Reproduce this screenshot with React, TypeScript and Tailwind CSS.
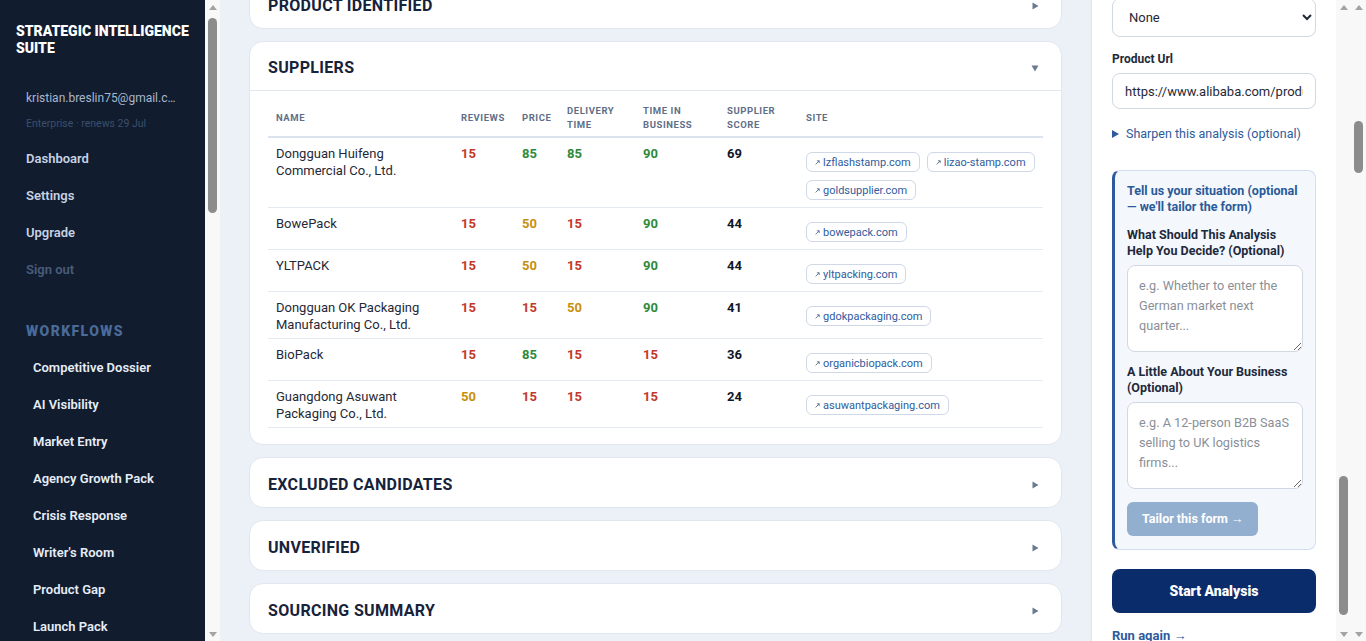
import { useLayoutEffect, useRef, type ReactNode, type Ref } from "react";

const SUPPLIERS = [
  { name: "Dongguan Huifeng Commercial Co., Ltd.", reviews: 15, price: 85, delivery: 85, tib: 90, score: 69, sites: ["lzflashstamp.com", "lizao-stamp.com", "goldsupplier.com"] },
  { name: "BowePack", reviews: 15, price: 50, delivery: 15, tib: 90, score: 44, sites: ["bowepack.com"] },
  { name: "YLTPACK", reviews: 15, price: 50, delivery: 15, tib: 90, score: 44, sites: ["yltpacking.com"] },
  { name: "Dongguan OK Packaging Manufacturing Co., Ltd.", reviews: 15, price: 15, delivery: 50, tib: 90, score: 41, sites: ["gdokpackaging.com"] },
  { name: "BioPack", reviews: 15, price: 85, delivery: 15, tib: 15, score: 36, sites: ["organicbiopack.com"] },
  { name: "Guangdong Asuwant Packaging Co., Ltd.", reviews: 50, price: 15, delivery: 15, tib: 15, score: 24, sites: ["asuwantpackaging.com"] },
];

const WORKFLOWS = [
  "Competitive Dossier", "AI Visibility", "Market Entry", "Agency Growth Pack",
  "Crisis Response", "Writer's Room", "Product Gap", "Launch Pack",
];

const LOWER_SECTIONS = ["Excluded Candidates", "Unverified", "Sourcing Summary"];

function scoreColor(v: number) {
  if (v >= 85) return "text-[#2e8a3b]";
  if (v >= 50) return "text-[#c98f0c]";
  return "text-[#c2382b]";
}

function TriRight() {
  return (
    <svg width="7" height="8" viewBox="0 0 7 8" className="shrink-0">
      <path d="M0.5 0.5L6.5 4L0.5 7.5Z" fill="#6b7a90" />
    </svg>
  );
}

function TriDown() {
  return (
    <svg width="8" height="7" viewBox="0 0 8 7" className="shrink-0">
      <path d="M0.5 0.5H7.5L4 6.5Z" fill="#6b7a90" />
    </svg>
  );
}

function LinkArrow() {
  return (
    <svg width="5" height="5" viewBox="0 0 5 5" className="shrink-0">
      <path d="M0.6 4.4L4.2 0.8M1.9 0.8H4.2V3.1" fill="none" stroke="#5a6f8f" strokeWidth="0.9" />
    </svg>
  );
}

// classic scrollbar: arrows + thumb (thumb offset/size passed as full class names)
function ScrollBar({ thumb }: { thumb: string }) {
  return (
    <div className="flex h-screen w-[15px] shrink-0 flex-col bg-[#f8f8f8]">
      <div className="flex h-[14px] items-center justify-center">
        <svg width="8" height="5" viewBox="0 0 8 5"><path d="M0 5L4 0L8 5Z" fill="#a3a3a3" /></svg>
      </div>
      <div className="flex-1 px-[3px]">
        <div className={`w-[9px] rounded-full bg-[#8c8c8c] ${thumb}`} />
      </div>
      <div className="flex h-[14px] items-center justify-center">
        <svg width="8" height="5" viewBox="0 0 8 5"><path d="M0 0L8 0L4 5Z" fill="#a3a3a3" /></svg>
      </div>
    </div>
  );
}

function Card({ title, open, children }: { title: string; open?: boolean; children?: ReactNode }) {
  return (
    <section className="rounded-[14px] border border-[#e1e7f0] bg-white">
      <div className={`flex h-[49px] items-center justify-between pt-1 pl-[18px] pr-[22px] ${open ? "border-b border-[#e1e7f0]" : ""}`}>
        <h2 className="text-[16px] font-bold uppercase tracking-[0.02em] text-[#17223b]">{title}</h2>
        {open ? <TriDown /> : <TriRight />}
      </div>
      {open && children}
    </section>
  );
}

function SuppliersTable() {
  const th = "px-2 pt-2 pb-1 text-left align-middle text-[9.5px] font-bold uppercase leading-[14px] tracking-[0.06em] text-[#5f6f88]";
  const num = "px-2 pt-[7px] pb-[5px] align-top text-[13px] font-bold leading-[17px]";
  return (
    <div className="px-[18px] pt-[5px] pb-4">
      <table className="w-full table-fixed border-collapse">
        <colgroup>
          <col className="w-[185px]" />
          <col className="w-[61px]" />
          <col className="w-[45px]" />
          <col className="w-[76px]" />
          <col className="w-[84px]" />
          <col className="w-[79px]" />
          <col />
        </colgroup>
        <thead>
          <tr className="border-b-2 border-[#dbe3ee]">
            <th className={th}>Name</th>
            <th className={th}>Reviews</th>
            <th className={th}>Price</th>
            <th className={th}>Delivery<br />Time</th>
            <th className={th}>Time in<br />Business</th>
            <th className={th}>Supplier<br />Score</th>
            <th className={th}>Site</th>
          </tr>
        </thead>
        <tbody>
          {SUPPLIERS.map((s) => (
            <tr key={s.name} className="border-b border-[#e5e9f0]">
              <td className="px-2 pt-[7px] pb-[5px] align-top text-[13px] leading-[17px] text-[#1f2937]">{s.name}</td>
              <td className={`${num} ${scoreColor(s.reviews)}`}>{s.reviews}</td>
              <td className={`${num} ${scoreColor(s.price)}`}>{s.price}</td>
              <td className={`${num} ${scoreColor(s.delivery)}`}>{s.delivery}</td>
              <td className={`${num} ${scoreColor(s.tib)}`}>{s.tib}</td>
              <td className={`${num} text-[#111827]`}>{s.score}</td>
              <td className="pt-[7px] pb-[5px] pl-2 align-top">
                <div className="mt-[7px] mb-[2px] flex flex-wrap gap-x-[7px] gap-y-2">
                  {s.sites.map((site) => (
                    <a key={site} className="flex h-5 items-center gap-[3px] rounded-md border border-[#cfd8e6] px-2 text-[11px] leading-none text-[#2f5c9e]">
                      <LinkArrow />
                      {site}
                    </a>
                  ))}
                </div>
              </td>
            </tr>
          ))}
        </tbody>
      </table>
    </div>
  );
}

function Sidebar() {
  return (
    <div className="flex h-screen w-[220px] shrink-0 bg-[#111c2f]">
      <aside className="h-screen w-[205px] overflow-hidden">
        <div className="pt-[23px] pr-3 pl-4 text-[14px] font-black uppercase leading-[17px] text-white">
          Strategic Intelligence Suite
        </div>
        <div className="px-[26px]">
          <div className="mt-[33px] truncate text-[12px] leading-4 text-[#a9b7cc]">kristian.breslin75@gmail.com</div>
          <div className="mt-[11px] text-[10.5px] leading-[14px] text-[#3c4f6b]">Enterprise · renews 29 Jul</div>
          <nav className="mt-[9px]">
            {["Dashboard", "Settings", "Upgrade"].map((n) => (
              <a key={n} className="block py-[9.5px] text-[13px] font-semibold leading-[18px] text-[#c7d2e3]">{n}</a>
            ))}
            <a className="block py-[9.5px] text-[13px] font-semibold leading-[18px] text-[#4a5d7a]">Sign out</a>
          </nav>
          <div className="mt-[34px] text-[14px] font-black uppercase leading-[18px] tracking-[0.1em] text-[#4a6a98]">Workflows</div>
        </div>
        <nav className="mt-[9px] px-[33px]">
          {WORKFLOWS.map((w) => (
            <a key={w} className="block py-[9.5px] text-[13px] font-semibold leading-[18px] text-[#e6edf7]">{w}</a>
          ))}
        </nav>
      </aside>
      <ScrollBar thumb="mt-[4px] h-[195px]" />
    </div>
  );
}

function FormPanel({ panelRef, selectRef }: { panelRef: Ref<HTMLElement>; selectRef: Ref<HTMLSelectElement> }) {
  const label = "mb-1.5 block text-[12px] font-bold leading-4 text-[#1e293b]";
  const box = "w-full rounded-lg border border-[#cfd8e3] bg-white px-3 text-[13px] text-[#1f2937] outline-none";
  const area = "mt-1.5 block h-[87px] w-full rounded-lg border border-[#cfd8e3] bg-white px-[11px] py-2.5 text-[12.7px] leading-5 text-[#1f2937] outline-none placeholder:text-[#8a8f98]";
  return (
    <div className="flex h-screen w-[260px] shrink-0 border-l border-[#dde4ee] bg-white">
      <aside ref={panelRef} className="h-screen flex-1 overflow-hidden px-5">
        <div className="pt-5">
          <label className={label}>Existing Supplier</label>
          <select ref={selectRef} className={`${box} h-[39px]`} defaultValue="None">
            <option>None</option>
          </select>
        </div>
        <div className="mt-[14px]">
          <label className={label}>Product Url</label>
          <input className={`${box} h-9`} defaultValue="https://www.alibaba.com/product-detail/custom-logo-printed-kraft-mailer-box" />
        </div>
        <div className="mt-[17px] flex items-center gap-[7px] text-[12.5px] leading-4 text-[#2d5b9c]">
          <svg width="7" height="8" viewBox="0 0 7 8"><path d="M0 0L7 4L0 8Z" fill="#2d5b9c" /></svg>
          Sharpen this analysis (optional)
        </div>
        <div className="mt-[28px] rounded-lg border border-l-[3px] border-[#d4deec] border-l-[#2c5a9c] bg-[#f4f8fd] pt-3 pr-3 pb-[13px] pl-3">
          <div className="text-[12.5px] font-bold leading-4 text-[#2b5a98]">Tell us your situation (optional — we'll tailor the form)</div>
          <label className="mt-3 block text-[12.5px] font-bold leading-4 text-[#1e293b]">What Should This Analysis Help You Decide? (Optional)</label>
          <textarea className={area} placeholder={"e.g. Whether to enter the\nGerman market next\nquarter..."} />
          <label className="mt-3 block text-[12.5px] font-bold leading-4 text-[#1e293b]">A Little About Your Business (Optional)</label>
          <textarea className={area} placeholder={"e.g. A 12-person B2B SaaS\nselling to UK logistics\nfirms..."} />
          <button className="mt-[13px] h-[34px] rounded-md bg-[#93afd0] px-[15px] text-[12.5px] font-bold text-white">Tailor this form →</button>
        </div>
        <button className="mt-[19px] h-11 w-full rounded-lg bg-[#0b2c6b] text-[14px] font-black text-white">Start Analysis</button>
        <div className="mt-[14px] pb-8 text-[13px] font-bold leading-[18px] text-[#2d5b9c]">Run again →</div>
      </aside>
      <ScrollBar thumb="mt-[462px] h-[139px]" />
    </div>
  );
}

export default function App() {
  const mainRef = useRef<HTMLElement>(null);
  const panelRef = useRef<HTMLElement>(null);
  const selectRef = useRef<HTMLSelectElement>(null);

  // сторінка прокручена: верхня картка наполовину схована
  useLayoutEffect(() => {
    if (mainRef.current) mainRef.current.scrollTop = 22;
    const a = panelRef.current;
    const sel = selectRef.current;
    if (a && sel) a.scrollTop = sel.getBoundingClientRect().top - a.getBoundingClientRect().top + a.scrollTop + 2;
  }, []);

  return (
    <div className="flex h-screen overflow-hidden bg-[#ecf0f7] font-['Roboto',sans-serif]">
      <Sidebar />

      <main ref={mainRef} className="h-screen min-w-0 flex-1 overflow-hidden px-[29px]">
        <div className="flex flex-col gap-3 pb-12">
          <Card title="Product Identified" />
          <Card title="Suppliers" open>
            <SuppliersTable />
          </Card>
          {LOWER_SECTIONS.map((t) => <Card key={t} title={t} />)}
        </div>
      </main>

      <FormPanel panelRef={panelRef} selectRef={selectRef} />
      <ScrollBar thumb="mt-[107px] h-[52px]" />
    </div>
  );
}
